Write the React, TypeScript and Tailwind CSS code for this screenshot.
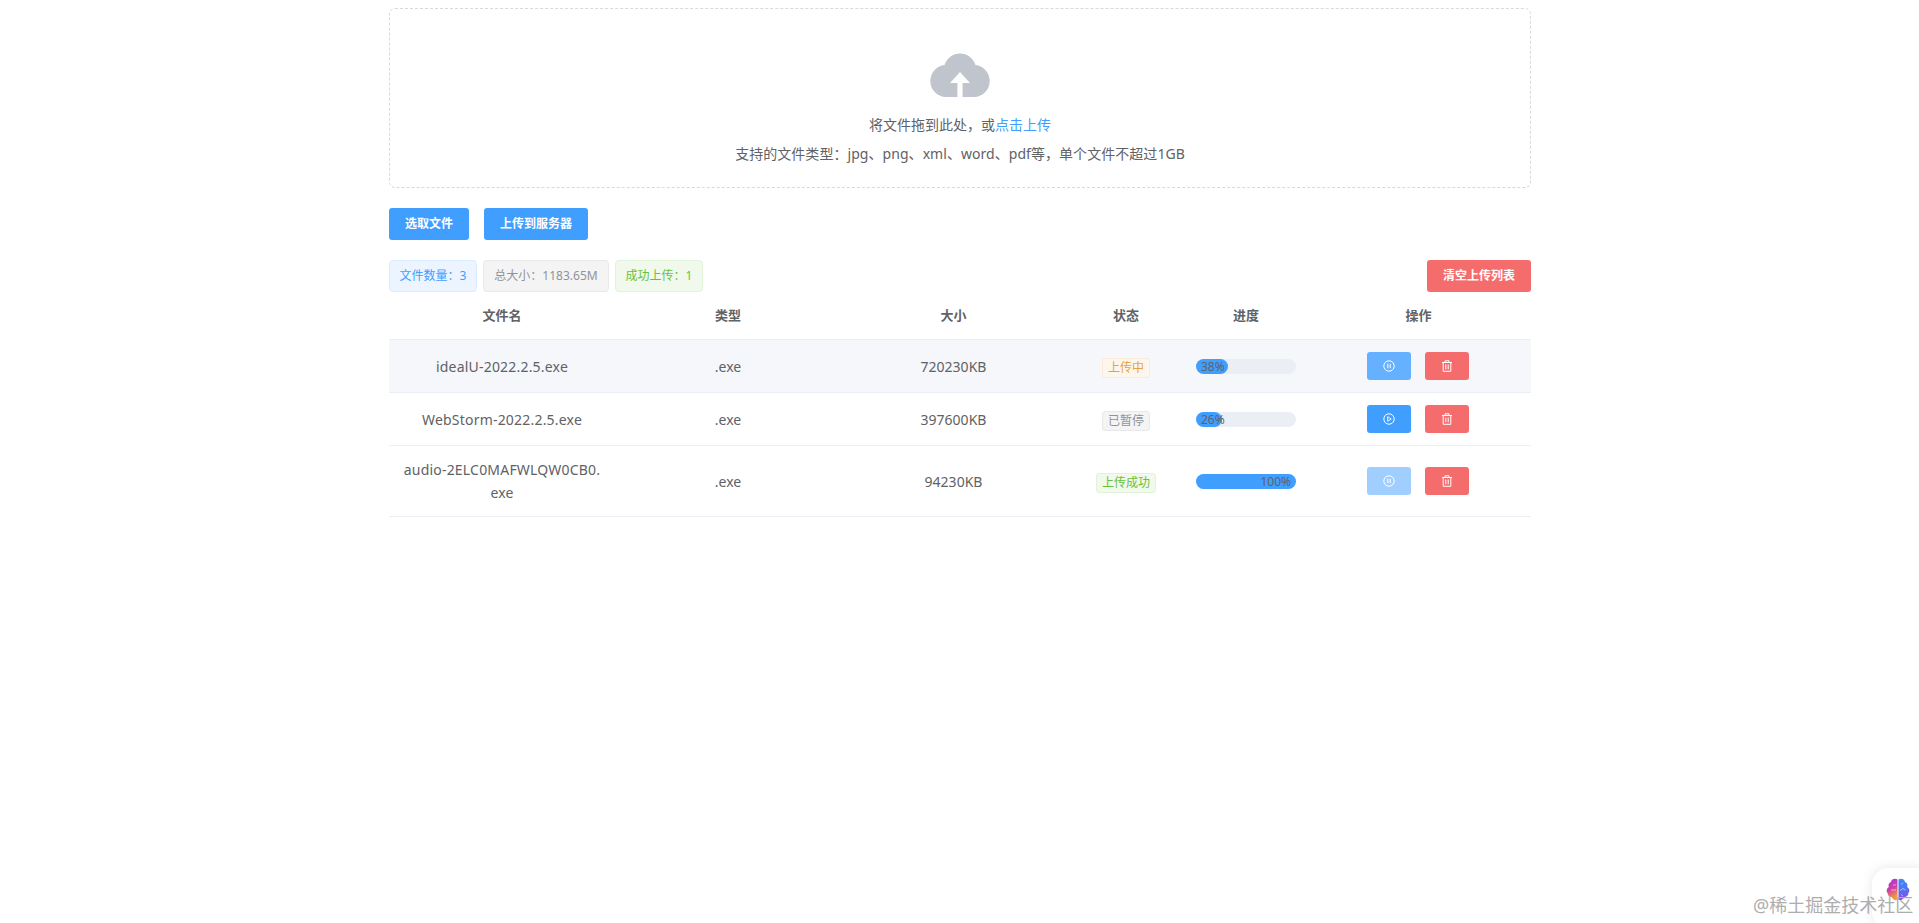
import * as React from 'react';

type FileRow = {
  name: string;
  size: string;
  status: string;
  statusClass: string;
  barClass: string;
  percent: string;
  actionClass: string;
  paused: boolean;
  rowClass: string;
};

const files: FileRow[] = [
  {
    name: 'idealU-2022.2.5.exe',
    size: '720230KB',
    status: '上传中',
    statusClass: 'bg-[#fdf6ec] border-[#faecd8] text-[#e6a23c]',
    barClass: 'w-[32px]',
    percent: '38%',
    actionClass: 'bg-[#66b1ff]',
    paused: false,
    rowClass: 'bg-[#f5f7fa]',
  },
  {
    name: 'WebStorm-2022.2.5.exe',
    size: '397600KB',
    status: '已暂停',
    statusClass: 'bg-[#f4f4f5] border-[#e9e9eb] text-[#909399]',
    barClass: 'w-[26px]',
    percent: '26%',
    actionClass: 'bg-[#409eff]',
    paused: true,
    rowClass: 'bg-white',
  },
  {
    name: 'audio-2ELC0MAFWLQW0CB0.\nexe',
    size: '94230KB',
    status: '上传成功',
    statusClass: 'bg-[#f0f9eb] border-[#e1f3d8] text-[#67c23a]',
    barClass: 'w-[100px]',
    percent: '100%',
    actionClass: 'bg-[#a0cfff]',
    paused: false,
    rowClass: 'bg-white',
  },
];

function CloudIcon() {
  return (
    <svg width="60" height="44" viewBox="0 0 60 44">
      <path
        d="M16 44A16 16 0 0 1 14.6 12.1 16 16 0 0 1 45.4 12.1 16 16 0 0 1 44 44Z"
        fill="#c0c4cc"
      />
      <path d="M30 19 40 30H32.6V44H27.4V30H20Z" fill="#fff" />
    </svg>
  );
}

function ActionIcon({ paused }: { paused: boolean }) {
  return (
    <svg width="12" height="12" viewBox="0 0 12 12" fill="none" stroke="#fff">
      <circle cx="6" cy="6" r="5.2" strokeWidth="1" />
      {paused ? (
        <path d="M4.7 3.7 8.2 6 4.7 8.3Z" strokeWidth="0.9" strokeLinejoin="round" />
      ) : (
        <path d="M4.8 3.8V8.2M7.2 3.8V8.2" strokeWidth="1" />
      )}
    </svg>
  );
}

function TrashIcon() {
  return (
    <svg width="12" height="12" viewBox="0 0 12 12" fill="none" stroke="#fff" strokeWidth="1">
      <path d="M1 2.5H11M4 2.5V.8H8V2.5M2.2 2.5V11.3H9.8V2.5M4.8 4.5V9.3M7.2 4.5V9.3" />
    </svg>
  );
}

function BrainIcon() {
  return (
    <svg width="24" height="23" viewBox="0 0 24 23">
      <defs>
        <linearGradient id="brainLeft" x1="0" y1="0" x2="0.3" y2="1">
          <stop offset="0" stopColor="#a436e0" />
          <stop offset="0.55" stopColor="#d13fa8" />
          <stop offset="1" stopColor="#f59a2f" />
        </linearGradient>
        <linearGradient id="brainRight" x1="0" y1="0" x2="0" y2="1">
          <stop offset="0" stopColor="#3b8df5" />
          <stop offset="0.6" stopColor="#5a6cf0" />
          <stop offset="1" stopColor="#a23fe0" />
        </linearGradient>
      </defs>
      <path
        d="M11.5 1.5C9 0 5.5 1 5 4 2.8 4.8 2 7 2.8 9 .5 10.5 0 13 1.5 15 2 18 4 19 5.5 19 7 22 10 23 11.5 21.5Z"
        fill="url(#brainLeft)"
      />
      <path
        d="M12.5 1.5C15 0 18.5 1 19 4 21.2 4.8 22 7 21.2 9 23.5 10.5 24 13 22.5 15 22 18 20 19 18.5 19 17 22 14 23 12.5 21.5Z"
        fill="url(#brainRight)"
      />
      <path
        d="M5 12H10M7 7H10M15 6.5 17 5M14 12.5 17 10.5 19.5 12M15 16.5 17 18"
        stroke="#fff"
        strokeOpacity="0.7"
        strokeWidth="0.7"
        fill="none"
      />
    </svg>
  );
}

const headers = ['文件名', '类型', '大小', '状态', '进度', '操作'];

export default function App() {
  return (
    <div className="relative h-[923px] overflow-hidden bg-white pl-px font-['Noto_Sans','Noto_Sans_CJK_SC',sans-serif] text-[14px] text-[#606266]">
      <div className="mx-auto w-[1142px] pt-2">
        <div className="flex h-[180px] flex-col items-center rounded-md border border-dashed border-[#d9d9d9] pt-[44px]">
          <CloudIcon />
          <p className="mt-4 leading-6">
            将文件拖到此处，或<span className="text-[#409eff]">点击上传</span>
          </p>
          <p className="mt-[5px] leading-6 tracking-[0.05px]">
            支持的文件类型：jpg、png、xml、word、pdf等，单个文件不超过1GB
          </p>
        </div>

        <div className="mt-5 flex gap-[15px]">
          <button className="h-8 rounded-[3px] bg-[#409eff] px-4 text-[12px] font-bold text-white">选取文件</button>
          <button className="h-8 rounded-[3px] bg-[#409eff] px-4 text-[12px] font-bold text-white">上传到服务器</button>
        </div>

        <div className="mt-5 flex items-center justify-between">
          <div className="flex gap-[6px] text-[12px]">
            <span className="flex h-8 w-[88px] items-center justify-center rounded-[4px] border border-[#d9ecff] bg-[#ecf5ff] text-[#409eff]">文件数量：3</span>
            <span className="flex h-8 w-[126px] items-center justify-center rounded-[4px] border border-[#e9e9eb] bg-[#f4f4f5] text-[#909399]">总大小：1183.65M</span>
            <span className="flex h-8 w-[88px] items-center justify-center rounded-[4px] border border-[#e1f3d8] bg-[#f0f9eb] text-[#67c23a]">成功上传：1</span>
          </div>
          <button className="h-8 rounded-[3px] bg-[#f56c6c] px-4 text-[12px] font-bold text-white">清空上传列表</button>
        </div>

        <table className="w-full table-fixed border-separate border-spacing-0 text-center">
          <colgroup>
            <col className="w-[226px]" />
            <col className="w-[226px]" />
            <col className="w-[225px]" />
            <col className="w-[120px]" />
            <col className="w-[120px]" />
            <col className="w-[225px]" />
          </colgroup>
          <thead>
            <tr className="text-[13px] leading-[23px]">
              {headers.map((title) => (
                <th key={title} className="border-b border-[#ebeef5] px-[10px] py-3 font-bold">
                  {title}
                </th>
              ))}
            </tr>
          </thead>
          <tbody>
            {files.map((file) => (
              <tr key={file.name} className={`leading-[23px] ${file.rowClass}`}>
                <td className="border-b border-[#ebeef5] px-[10px] py-3 tracking-[0.2px] whitespace-pre-line">{file.name}</td>
                <td className="border-b border-[#ebeef5] px-[10px] py-3">.exe</td>
                <td className="border-b border-[#ebeef5] px-[10px] py-3">{file.size}</td>
                <td className="border-b border-[#ebeef5] px-[10px] py-3">
                  <span className={`inline-flex h-5 items-center rounded-[3px] border px-[5px] align-middle text-[12px] ${file.statusClass}`}>
                    {file.status}
                  </span>
                </td>
                <td className="border-b border-[#ebeef5] px-[10px] py-3">
                  <div className="h-[15px] w-[100px] rounded-full bg-[#ebeef5]">
                    <div className={`flex h-[15px] rounded-full bg-[#409eff] pl-[5px] text-[12px] leading-[15px] ${file.barClass}`}>
                      <span className="mr-[5px] ml-auto shrink-0">{file.percent}</span>
                    </div>
                  </div>
                </td>
                <td className="border-b border-[#ebeef5] px-[10px] py-3">
                  <div className="flex justify-center gap-[14px] pr-[1px]">
                    <button className={`flex h-7 w-[44px] items-center justify-center rounded-[3px] ${file.actionClass}`}>
                      <ActionIcon paused={file.paused} />
                    </button>
                    <button className="flex h-7 w-[44px] items-center justify-center rounded-[3px] bg-[#f56c6c]">
                      <TrashIcon />
                    </button>
                  </div>
                </td>
              </tr>
            ))}
          </tbody>
        </table>
      </div>

      <div className="absolute top-[868px] left-[1872px] flex h-[60px] w-[60px] rounded-2xl bg-white pt-[10px] pl-[14px] shadow-[0_0_12px_rgba(0,0,0,0.1)]">
        <div>
          <BrainIcon />
        </div>
      </div>
      <span className="absolute top-[893px] left-[1753px] text-[18px] leading-6 whitespace-nowrap text-[#adadad]">
        @稀土掘金技术社区
      </span>
    </div>
  );
}
